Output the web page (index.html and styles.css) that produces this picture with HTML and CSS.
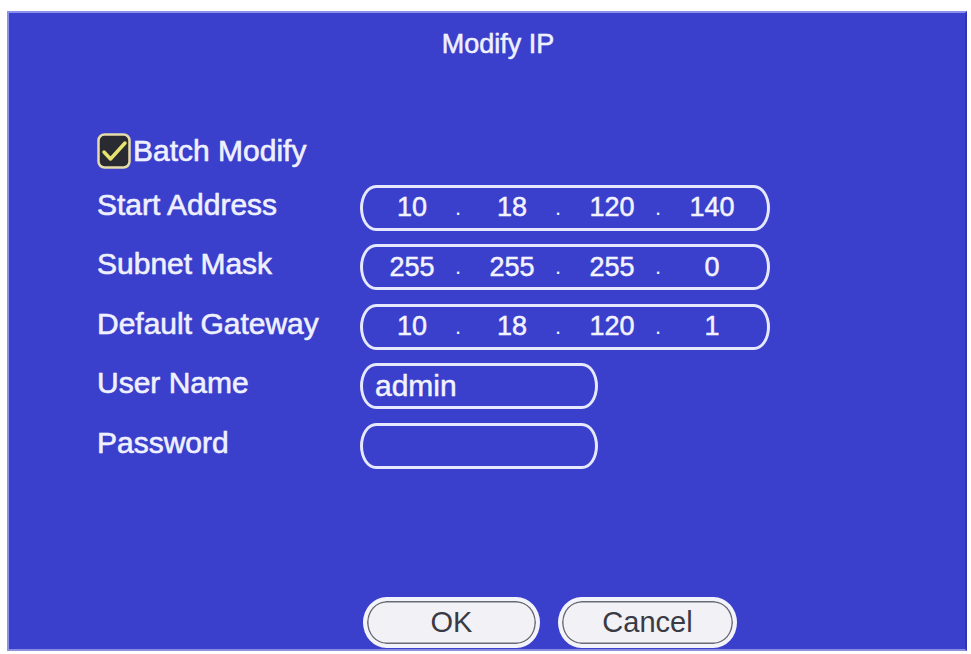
FILE: index.html
```html
<!DOCTYPE html>
<html>
<head>
<meta charset="utf-8">
<title>Modify IP</title>
<link rel="stylesheet" href="styles.css">
</head>
<body>
<div class="panel">
  <div class="title">Modify IP</div>
  <div class="form">
    <div class="row batch">
      <span class="check">
        <svg width="34" height="36" viewBox="0 0 34 36">
          <rect x="1.5" y="1.5" width="31" height="33" rx="6" ry="6" fill="#2a2a32" stroke="#e6dcaa" stroke-width="2.5"/>
          <polyline points="7,19 13.5,26 28,10" fill="none" stroke="#e6e46e" stroke-width="3.5" stroke-linecap="round" stroke-linejoin="round"/>
        </svg>
      </span>
      <span class="label">Batch Modify</span>
    </div>
    <div class="row">
      <span class="label">Start Address</span>
      <div class="field ip">
        <span class="seg">10</span><span class="dot">.</span>
        <span class="seg">18</span><span class="dot">.</span>
        <span class="seg">120</span><span class="dot">.</span>
        <span class="seg">140</span>
      </div>
    </div>
    <div class="row">
      <span class="label">Subnet Mask</span>
      <div class="field ip">
        <span class="seg">255</span><span class="dot">.</span>
        <span class="seg">255</span><span class="dot">.</span>
        <span class="seg">255</span><span class="dot">.</span>
        <span class="seg">0</span>
      </div>
    </div>
    <div class="row">
      <span class="label">Default Gateway</span>
      <div class="field ip">
        <span class="seg">10</span><span class="dot">.</span>
        <span class="seg">18</span><span class="dot">.</span>
        <span class="seg">120</span><span class="dot">.</span>
        <span class="seg">1</span>
      </div>
    </div>
    <div class="row">
      <span class="label">User Name</span>
      <div class="field text">admin</div>
    </div>
    <div class="row">
      <span class="label">Password</span>
      <div class="field text"></div>
    </div>
  </div>
  <div class="buttons">
    <button class="btn ok">OK</button>
    <button class="btn cancel">Cancel</button>
  </div>
</div>
</body>
</html>
```

FILE: styles.css
```css
html, body {
  margin: 0;
  padding: 0;
  background: #ffffff;
}

body {
  font-family: "Liberation Sans", Arial, sans-serif;
  width: 971px;
  height: 654px;
  overflow: hidden;
}

.panel {
  box-sizing: border-box;
  margin: 11px 0 0 7px;
  width: 960px;
  height: 640px;
  background: #3a3fcc;
  border: 2px solid;
  border-color: #8c92ec #3034b4 #8a8ee0 #8c92ec;
  display: flex;
  flex-direction: column;
  padding: 15px 0 1px 0;
  color: #eef0ff;
}

.title {
  font-size: 27px;
  line-height: 32px;
  text-align: center;
  padding-left: 22px;
  -webkit-text-stroke: 0.4px #eef0ff;
  text-shadow: 0 0 1px rgba(255, 255, 255, 0.4);
}

.form {
  margin-top: 68px;
  padding-left: 88px;
  display: flex;
  flex-direction: column;
  gap: 13.5px;
}

.row {
  display: flex;
  height: 46px;
  align-items: center;
}

.row .label {
  width: 263px;
  font-size: 30px;
  line-height: 40px;
  align-self: flex-start;
  white-space: nowrap;
  -webkit-text-stroke: 0.5px #eef0ff;
  text-shadow: 0 0 1px rgba(255, 255, 255, 0.4);
}

.row.batch {
  margin-bottom: -3px;
}

.row.batch .label {
  width: auto;
  align-self: center;
  line-height: 46px;
  margin-left: 2px;
}

.check {
  display: flex;
  width: 34px;
  height: 36px;
}

.field {
  box-sizing: border-box;
  height: 46px;
  border: 3px solid #e6e8ff;
  border-radius: 16px / 23px;
  display: flex;
  align-items: center;
  color: #f2f3ff;
  -webkit-text-stroke: 0.5px #f2f3ff;
}

.ip {
  width: 410px;
  padding-left: 9px;
}

.seg {
  width: 80px;
  text-align: center;
  font-size: 27px;
}

.dot {
  width: 20px;
  box-sizing: border-box;
  padding-left: 3px;
  font-size: 22px;
  -webkit-text-stroke: 0;
}

.text {
  width: 238px;
  padding-left: 12px;
  font-size: 30px;
}

.buttons {
  margin-top: auto;
  display: flex;
  gap: 18px;
  padding-left: 354px;
}

.btn {
  box-sizing: border-box;
  height: 51px;
  padding: 0;
  border: 4px solid #f3f3fb;
  border-radius: 24px / 26px;
  background: #f1f1f6;
  box-shadow: inset 0 0 0 1.5px #6a6a74;
  font-family: "Liberation Sans", Arial, sans-serif;
  font-size: 29px;
  color: #3a3a44;
}

.btn.ok {
  width: 177px;
}

.btn.cancel {
  width: 179px;
}
```
